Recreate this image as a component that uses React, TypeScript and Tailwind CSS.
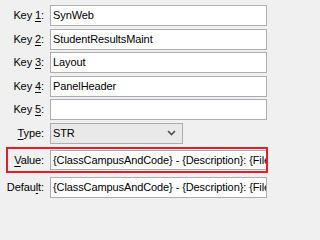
const inputCls =
  "h-[21px] border border-[#abadb3] bg-white pl-[2px] flex items-center overflow-hidden whitespace-nowrap";

function Label({ pre, acc, post }: { pre: string; acc: string; post: string }) {
  return (
    <span className="text-right text-[#000] whitespace-nowrap">
      {pre}
      <u className="underline-offset-[2px]">{acc}</u>
      {post}
    </span>
  );
}

const rows = [
  { n: "1", v: "SynWeb" },
  { n: "2", v: "StudentResultsMaint" },
  { n: "3", v: "Layout" },
  { n: "4", v: "PanelHeader" },
  { n: "5", v: "" },
];

const formula = "{ClassCampusAndCode} - {Description}: {FileName}";

export default function App() {
  return (
    <div className="min-h-screen w-full bg-[#f0f0f0]">
      <div className="w-[269px] h-[205px] overflow-hidden pt-[5px] pr-[2px] font-['Liberation_Sans',Arial,sans-serif] text-[11px] tracking-[-0.1px] text-black">
        <div className="flex flex-col gap-[2.5px]">
          {rows.map((r) => (
            <div key={r.n} className="grid grid-cols-[44px_1fr] gap-x-[6px] items-center">
              <Label pre="Key " acc={r.n} post=":" />
              <div className={inputCls}>{r.v}</div>
            </div>
          ))}

          <div className="grid grid-cols-[44px_133px] gap-x-[6px] items-center">
            <Label pre="" acc="T" post="ype:" />
            <div className="h-[21px] border border-[#adadad] bg-[#e9e9e9] pl-[2px] pr-[6px] flex items-center justify-between">
              <span>STR</span>
              <svg width="9" height="6" viewBox="0 0 9 6">
                <path d="M1 1 L4.5 4.5 L8 1" fill="none" stroke="#505050" strokeWidth="1.6" />
              </svg>
            </div>
          </div>

          <div className="relative mt-[4px] grid grid-cols-[44px_1fr] gap-x-[6px] items-center">
            <Label pre="" acc="V" post="alue:" />
            <div className={inputCls + " !h-[20px]"}>{formula}</div>
            <div className="absolute left-[6px] -top-[3px] -right-[1px] -bottom-[3px] border-2 border-[#ec1c24] pointer-events-none" />
          </div>

          <div className="mt-[4.5px] grid grid-cols-[44px_1fr] gap-x-[6px] items-center">
            <Label pre="Defau" acc="l" post="t:" />
            <div className={inputCls}>{formula}</div>
          </div>
        </div>
      </div>
    </div>
  );
}
